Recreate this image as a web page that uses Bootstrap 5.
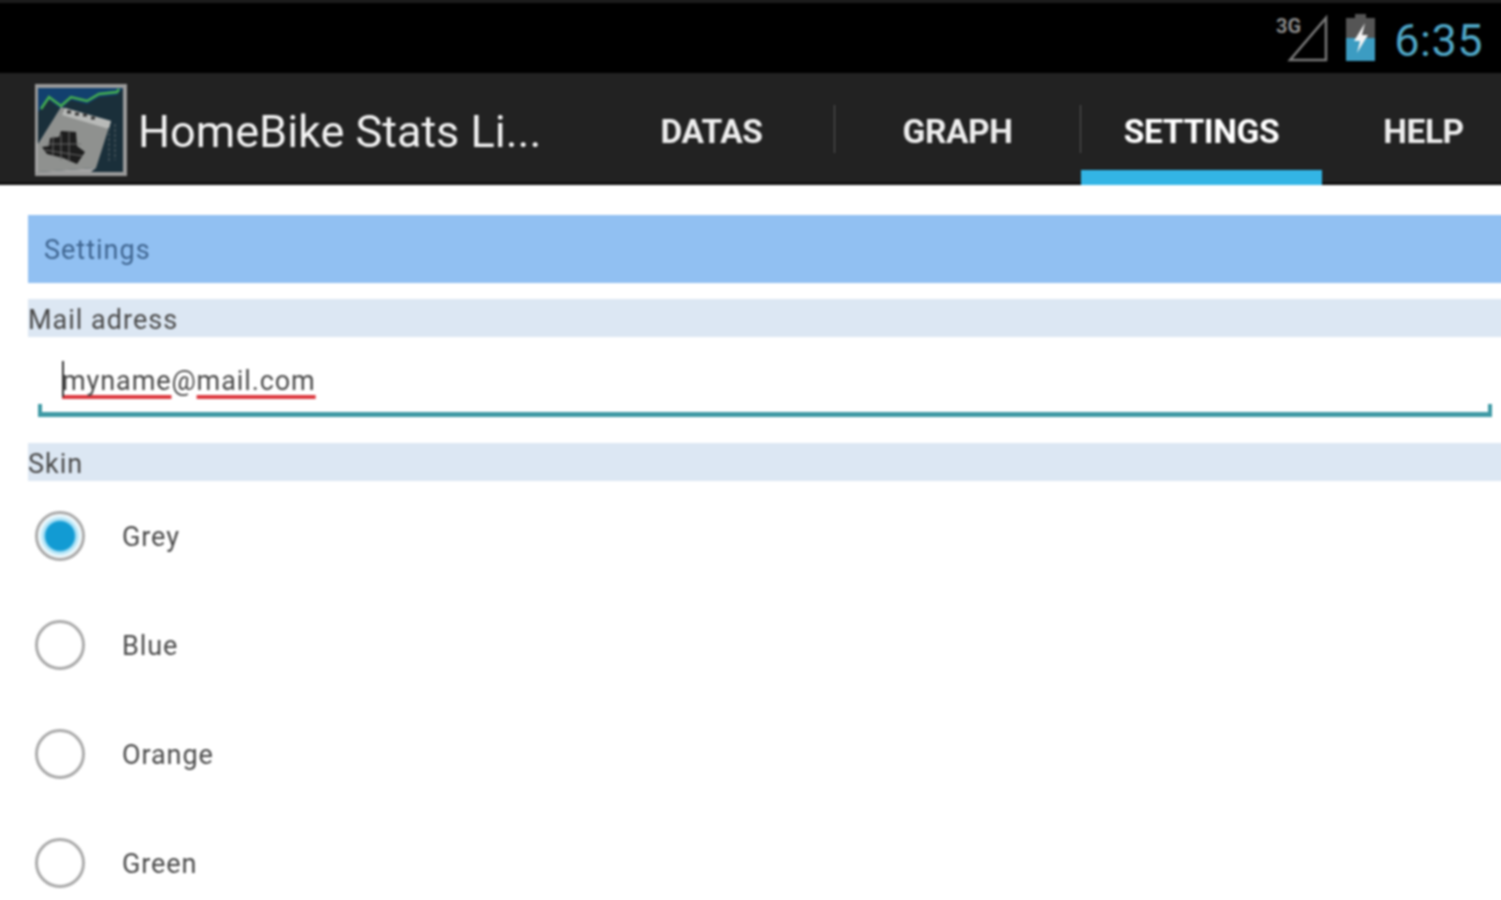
<!DOCTYPE html>
<html lang="en">
<head>
    <meta charset="UTF-8">
    <meta name="viewport" content="width=device-width, initial-scale=1.0">
    <title>HomeBike Stats Lite</title>
    <!-- Bootstrap CSS -->
    <link href="https://cdn.jsdelivr.net/npm/bootstrap@5.3.0/dist/css/bootstrap.min.css" rel="stylesheet">
    <!-- Custom CSS -->
    <style>
        html, body {
            height: 900px;
            overflow: hidden;
            background-color: #fff;
        }

        body {
            font-family: Roboto, "Liberation Sans", sans-serif;
        }

        /* soft look of the screenshot; negative margin keeps the blur off the window edges */
        .phone-screen {
            filter: blur(0.8px);
            margin: -4px;
        }

        .status-bar {
            height: 77px;
            background-color: #000;
            border-top: 7px solid #1c1c1c;
            padding-right: 22px;
            padding-top: 9px;
        }

        .status-battery {
            margin-left: 13px;
        }

        .status-clock {
            color: #4fa6c6;
            font-size: 45px;
            line-height: 58px;
            letter-spacing: 0.5px;
            margin-left: 17px;
        }

        .action-bar {
            height: 112px;
            background-color: #222;
            box-shadow: inset 0 -3px 0 #111;
            padding-left: 39px;
        }

        .app-icon {
            flex: none;
            margin-top: 1px;
        }

        .app-title {
            flex: none;
            color: #f2f2f2;
            font-size: 45px;
            line-height: 1;
            margin-left: 11px;
            width: 451px;
            padding-top: 5px;
            white-space: nowrap;
        }

        .tab-item {
            flex: none;
            color: #eee;
            font-size: 33.5px;
            font-weight: 700;
            height: 112px;
            padding-top: 6px;
            letter-spacing: -0.4px;
        }

        .tab-divider {
            flex: none;
            width: 1px;
            height: 48px;
            background-color: #555;
        }

        .tab-wide {
            width: 245px;
        }

        .tab-active {
            width: 241px;
            border-bottom: 15px solid #33b5e5;
            padding-top: 21px;
            color: #fff;
        }

        .tab-last {
            width: 179px;
            padding-left: 24px;
        }

        .page-body {
            padding: 30px 0 0 32px;
        }

        .title-strip {
            height: 68px;
            background-color: #91c0f2;
            color: #3f6590;
            font-size: 27px;
            letter-spacing: 1px;
            padding-left: 16px;
            padding-top: 2px;
            margin-bottom: 16px;
        }

        .section-strip {
            height: 38px;
            background-color: #dce7f3;
            color: #4a4a4a;
            font-size: 27px;
            letter-spacing: 1px;
            padding-top: 4px;
        }

        .mail-field {
            height: 80px;
            margin: 0 13px 26px 10px;
            padding-left: 24px;
            padding-top: 27px;
            border-bottom: 5px solid #3f9aa5;
            color: #4a4a4a;
            font-size: 27px;
            line-height: 34px;
            letter-spacing: 0.9px;
        }

        .mail-field::before,
        .mail-field::after {
            content: "";
            position: absolute;
            bottom: -5px;
            width: 4px;
            height: 13px;
            background-color: #3f9aa5;
        }

        .mail-field::before {
            left: 0;
        }

        .mail-field::after {
            right: 0;
        }

        .text-caret {
            position: absolute;
            left: 24px;
            top: 24px;
            width: 2px;
            height: 36px;
            background-color: #333;
        }

        .spell-error {
            text-decoration: underline 4px #dd3a40;
            text-decoration-skip-ink: none;
            text-underline-offset: 5px;
        }

        .skin-list {
            padding-top: 30px;
        }

        .skin-row {
            height: 109px;
            margin: 0;
            padding: 0 0 0 7px;
            gap: 37px;
        }

        .skin-row:last-child {
            height: 70px;
        }

        .skin-row .form-check-input {
            width: 50px;
            height: 50px;
            margin: 0;
            float: none;
            flex: none;
            border: 3px solid #aaa;
            background-color: #fff;
        }

        .skin-row .form-check-input:checked {
            background-color: #fff;
            background-image: radial-gradient(circle, #129bd3 0, #129bd3 14px, #9fdcf4 16px, #d8f2fb 19px, #fff 22px);
            border-color: #aaa;
        }

        .skin-row .form-check-label {
            color: #4a4a4a;
            font-size: 27px;
            letter-spacing: 0.9px;
            margin-top: 6px;
        }
    </style>
</head>
<body>
    <div class="phone-screen">
        <!-- Status bar -->
        <div class="status-bar d-flex justify-content-end align-items-start">
            <svg width="56" height="52" viewBox="0 0 56 52">
                <path d="M50 6V48H14Z" fill="none" stroke="#7a7a7a" stroke-width="2.5"/>
                <text x="0" y="21" fill="#8a8a8a" font-family="Roboto, sans-serif" font-weight="700" font-size="20">3G</text>
            </svg>
            <svg class="status-battery" width="32" height="52" viewBox="0 0 32 52">
                <path d="M10 2H21V6H30V28H1V6H10Z" fill="#555"/>
                <path d="M1 26H30V49H1Z" fill="#3c9cc2"/>
                <path d="M20 11L9 29H15L12 41L23 23H17Z" fill="#f4f4f4"/>
            </svg>
            <span class="status-clock">6:35</span>
        </div>

        <!-- Action bar -->
        <div class="action-bar d-flex align-items-center">
            <svg class="app-icon" width="92" height="92" viewBox="0 0 92 92">
                <rect width="92" height="92" fill="#9a9a9a"/>
                <rect x="3" y="4" width="85" height="84" fill="#12406e"/>
                <path d="M3 28L14 16L26 25L36 16L52 20L64 13L82 11L88 4V88H3Z" fill="#1a2f3a"/>
                <path d="M6 25L14 13L26 22L36 13L52 17L64 10L82 8L84 5" fill="none" stroke="#45b04f" stroke-width="2.5"/>
                <path d="M3 60L26 23L76 37L61 84L3 88Z" fill="#8f918f"/>
                <path d="M3 60L3 88L61 84L56 88H0V56Z" fill="#a5a5a5"/>
                <path d="M30 24L76 37L74 45L27 31Z" fill="#b8bab8"/>
                <path d="M32 28H36M40 30H44M48 31H52M56 34H60" stroke="#333" stroke-width="3"/>
                <path d="M7 63L14 62L15 54L24 53L26 47L41 48L42 62L50 68L42 80L28 74L12 70Z" fill="#1d1d1d"/>
                <path d="M18 52L18 72M26 50L26 76M34 48L34 78M12 60L46 60M10 66L48 72" stroke="#6a6a6a" stroke-width="1"/>
                <path d="M74 44V78M80 40V76" stroke="#3a4a52" stroke-width="2" stroke-dasharray="3 2"/>
            </svg>
            <div class="app-title">HomeBike Stats Li...</div>
            <div class="tab-item tab-wide d-flex align-items-center justify-content-center">DATAS</div>
            <div class="tab-divider"></div>
            <div class="tab-item tab-wide d-flex align-items-center justify-content-center">GRAPH</div>
            <div class="tab-divider"></div>
            <div class="tab-item tab-active d-flex align-items-center justify-content-center">SETTINGS</div>
            <div class="tab-item tab-last d-flex align-items-center justify-content-center">HELP</div>
        </div>

        <!-- Settings form -->
        <div class="page-body">
            <div class="title-strip d-flex align-items-center">Settings</div>
            <div class="section-strip d-flex align-items-center">Mail adress</div>
            <div class="mail-field position-relative">
                <span class="text-caret"></span><span class="spell-error">myname</span>@<span class="spell-error">mail.com</span>
            </div>
            <div class="section-strip d-flex align-items-center">Skin</div>
            <div class="skin-list">
                <div class="form-check skin-row d-flex align-items-start">
                    <input class="form-check-input" type="radio" name="skin" id="skinGrey" checked>
                    <label class="form-check-label" for="skinGrey">Grey</label>
                </div>
                <div class="form-check skin-row d-flex align-items-start">
                    <input class="form-check-input" type="radio" name="skin" id="skinBlue">
                    <label class="form-check-label" for="skinBlue">Blue</label>
                </div>
                <div class="form-check skin-row d-flex align-items-start">
                    <input class="form-check-input" type="radio" name="skin" id="skinOrange">
                    <label class="form-check-label" for="skinOrange">Orange</label>
                </div>
                <div class="form-check skin-row d-flex align-items-start">
                    <input class="form-check-input" type="radio" name="skin" id="skinGreen">
                    <label class="form-check-label" for="skinGreen">Green</label>
                </div>
            </div>
        </div>
    </div>

    <!-- Bootstrap JS -->
    <script src="https://cdn.jsdelivr.net/npm/bootstrap@5.3.0/dist/js/bootstrap.bundle.min.js"></script>
</body>
</html>
